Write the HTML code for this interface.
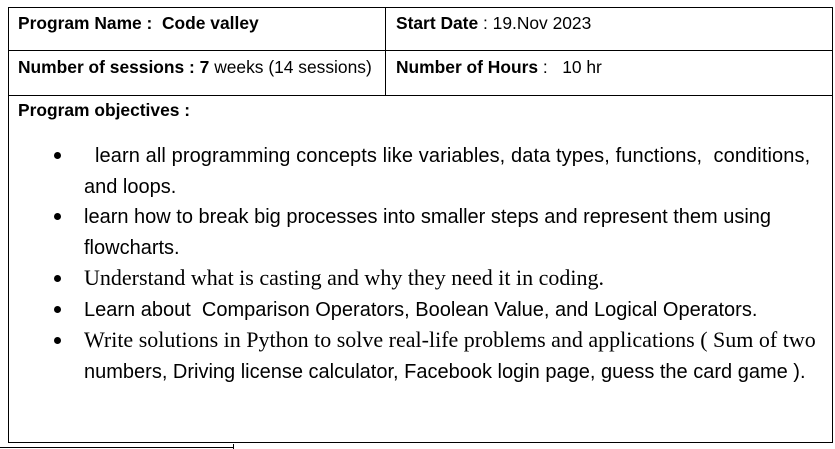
<!DOCTYPE html>
<html><head><meta charset="utf-8"><style>
body{margin:0;width:835px;height:449px;background:#fff;position:relative;overflow:hidden;font-family:"Liberation Sans",sans-serif;color:#000}
.l{position:absolute;background:#000}
.t{position:absolute;white-space:nowrap;line-height:1}
.s{font-size:17.4px}
.b{font-size:20px}
.tm{font-family:"Liberation Serif",serif;font-size:22px}
.d{position:absolute;width:7px;height:7px;border-radius:50%;background:#000}
</style></head><body>
<div class="l" style="left:8px;top:7px;width:825px;height:1px"></div>
<div class="l" style="left:8px;top:50px;width:825px;height:1px"></div>
<div class="l" style="left:8px;top:95px;width:825px;height:1px"></div>
<div class="l" style="left:8px;top:442px;width:825px;height:1px"></div>
<div class="l" style="left:8px;top:7px;width:1px;height:436px"></div>
<div class="l" style="left:832px;top:7px;width:1px;height:436px"></div>
<div class="l" style="left:385px;top:7px;width:1px;height:89px"></div>
<div class="l" style="left:0;top:447px;width:233px;height:1px"></div>
<div class="l" style="left:233px;top:444px;width:1px;height:5px"></div>

<div class="t s" style="left:18px;top:15px"><b>Program Name :&nbsp; Code valley</b></div>
<div class="t s" style="left:396px;top:15px"><b>Start Date</b> : 19.Nov 2023</div>
<div class="t s" style="left:18px;top:59px"><b>Number of sessions : 7</b> weeks (14 sessions)</div>
<div class="t s" style="left:396px;top:59px"><b>Number of Hours</b> :&nbsp;&nbsp; 10 hr</div>
<div class="t s" style="left:18px;top:102px"><b>Program objectives :</b></div>

<div class="d" style="left:54px;top:152px"></div>
<div class="t b" style="left:95px;top:146px;letter-spacing:0.1px">learn all programming concepts like variables, data types, functions,&nbsp; conditions,</div>
<div class="t b" style="left:84px;top:177px">and loops.</div>
<div class="d" style="left:54px;top:213px"></div>
<div class="t b" style="left:84px;top:207px">learn how to break big processes into smaller steps and represent them using</div>
<div class="t b" style="left:84px;top:238px">flowcharts.</div>
<div class="d" style="left:54px;top:275px"></div>
<div class="t tm" style="left:84px;top:267px">Understand what is casting and why they need it in coding.</div>
<div class="d" style="left:54px;top:306px"></div>
<div class="t b" style="left:84px;top:300px">Learn about&nbsp; Comparison Operators, Boolean Value, and Logical Operators.</div>
<div class="d" style="left:54px;top:337px"></div>
<div class="t tm" style="left:84px;top:329px">Write solutions in Python to solve real-life problems and applications ( Sum of two</div>
<div class="t b" style="left:84px;top:362px">numbers, Driving license calculator, Facebook login page, guess the card game ).</div>
</body></html>
